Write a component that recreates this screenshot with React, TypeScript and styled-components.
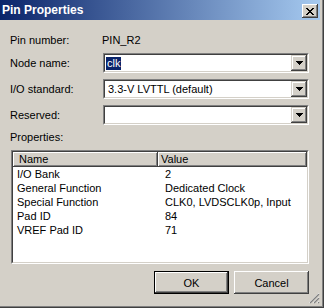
import React from 'react';
import styled, { createGlobalStyle } from 'styled-components';

const Global = createGlobalStyle`
  html, body { margin: 0; padding: 0; background: #d4d0c8; }
  body {
    font-family: "Liberation Sans", Arial, sans-serif;
    font-size: 11px;
    color: #000;
  }
  * { box-sizing: border-box; }
`;

const Window = styled.div`
  width: 324px;
  height: 308px;
  background: #d4d0c8;
  display: flex;
  flex-direction: column;
  padding: 0 4px 4px 0;
  box-shadow: inset -1px -1px #404040, inset -2px -2px #808080;
  position: relative;
`;

const TitleBar = styled.div`
  height: 20px;
  flex: none;
  display: flex;
  align-items: center;
  justify-content: space-between;
  padding: 0 2px 0 2px;
  background: linear-gradient(to right, #0a246a, #a6caf0);
`;

const TitleText = styled.span`
  color: #fff;
  font-weight: bold;
  font-size: 12px;
  line-height: 20px;
`;

const CloseButton = styled.div`
  width: 16px;
  height: 14px;
  margin-top: 2px;
  background: #d4d0c8;
  box-shadow: inset -1px -1px #404040, inset 1px 1px #fff, inset -2px -2px #808080;
  display: flex;
  align-items: center;
  justify-content: center;
`;

const Content = styled.div`
  flex: 1;
  display: flex;
  flex-direction: column;
  padding: 13px 11px 0 10px;
`;

const Form = styled.div`
  display: grid;
  grid-template-columns: 93px 206px;
  grid-template-rows: 14px 20px 20px 20px;
  row-gap: 6px;
  align-items: center;
`;

const Label = styled.div`
  line-height: 14px;
  white-space: nowrap;
`;

const StaticValue = styled.div`
  line-height: 14px;
  margin-left: -1px;
`;

const Combo = styled.div`
  height: 20px;
  border: 1px solid;
  border-color: #808080 #fff #fff #808080;
  background: #fff;
`;

const ComboInner = styled.div`
  height: 100%;
  border: 1px solid;
  border-color: #404040 #d4d0c8 #d4d0c8 #404040;
  display: flex;
  align-items: center;
`;

const ComboText = styled.div<{ $selected?: boolean }>`
  flex: 1;
  padding-left: ${(p) => (p.$selected ? '1px' : '3px')};
  line-height: 14px;
  white-space: nowrap;
  overflow: hidden;
`;

const Selection = styled.span`
  background: #0a246a;
  color: #fff;
  padding: 0 1px;
  display: inline-block;
  line-height: 13px;
`;

const DropButton = styled.div`
  width: 16px;
  height: 16px;
  flex: none;
  background: #d4d0c8;
  box-shadow: inset -1px -1px #404040, inset 1px 1px #d4d0c8, inset -2px -2px #808080, inset 2px 2px #fff;
  display: flex;
  align-items: center;
  justify-content: center;
`;

const SectionLabel = styled.div`
  margin-top: 5px;
  line-height: 14px;
`;

const ListBox = styled.div`
  margin: 6px 0 0 1px;
  height: 114px;
  border: 1px solid;
  border-color: #808080 #fff #fff #808080;
  background: #fff;
`;

const ListInner = styled.div`
  height: 100%;
  border: 1px solid;
  border-color: #404040 #d4d0c8 #d4d0c8 #404040;
  display: flex;
  flex-direction: column;
`;

const HeaderRow = styled.div`
  display: grid;
  grid-template-columns: 145px 1fr;
  height: 15px;
`;

const HeaderCell = styled.div<{ $pad: number }>`
  background: #d4d0c8;
  box-shadow: inset -1px -1px #404040, inset 1px 1px #fff, inset -2px -2px #808080;
  padding-left: ${(p) => p.$pad}px;
  line-height: 15px;
`;

const DataRow = styled.div`
  display: grid;
  grid-template-columns: 145px 1fr;
  height: 14px;
  line-height: 14px;
`;

const DataCell = styled.div<{ $pad: number }>`
  padding-left: ${(p) => p.$pad}px;
  white-space: nowrap;
`;

const ButtonRow = styled.div`
  margin-top: 7px;
  display: flex;
  justify-content: flex-end;
  gap: 5px;
`;

const Button = styled.div<{ $default?: boolean }>`
  width: 75px;
  height: 23px;
  background: #d4d0c8;
  display: flex;
  align-items: center;
  justify-content: center;
  box-shadow: ${(p) =>
    p.$default
      ? 'inset 0 0 0 1px #000, inset -2px -2px #404040, inset 2px 2px #fff, inset -3px -3px #808080'
      : 'inset -1px -1px #404040, inset 1px 1px #fff, inset -2px -2px #808080'};
`;

const Grip = styled.svg`
  position: absolute;
  right: 4px;
  bottom: 4px;
`;

const Arrow = () => (
  <svg width="7" height="4" viewBox="0 0 7 4">
    <path d="M0 0h7v1H0zM1 1h5v1H1zM2 2h3v1H2zM3 3h1v1H3z" fill="#000" />
  </svg>
);

const rows: [string, string][] = [
  ['I/O Bank', '2'],
  ['General Function', 'Dedicated Clock'],
  ['Special Function', 'CLK0, LVDSCLK0p, Input'],
  ['Pad ID', '84'],
  ['VREF Pad ID', '71'],
];

export default function App() {
  return (
    <>
      <Global />
      <Window>
        <TitleBar>
          <TitleText>Pin Properties</TitleText>
          <CloseButton>
            <svg width="8" height="7" viewBox="0 0 8 7">
              <path
                d="M0 0h2v1H0zM6 0h2v1H6zM1 1h2v1H1zM5 1h2v1H5zM2 2h4v1H2zM3 3h2v1H3zM2 4h4v1H2zM1 5h2v1H1zM5 5h2v1H5zM0 6h2v1H0zM6 6h2v1H6z"
                fill="#000"
              />
            </svg>
          </CloseButton>
        </TitleBar>
        <Content>
          <Form>
            <Label>Pin number:</Label>
            <StaticValue>PIN_R2</StaticValue>
            <Label>Node name:</Label>
            <Combo>
              <ComboInner>
                <ComboText $selected>
                  <Selection>clk</Selection>
                </ComboText>
                <DropButton>
                  <Arrow />
                </DropButton>
              </ComboInner>
            </Combo>
            <Label>I/O standard:</Label>
            <Combo>
              <ComboInner>
                <ComboText>3.3-V LVTTL (default)</ComboText>
                <DropButton>
                  <Arrow />
                </DropButton>
              </ComboInner>
            </Combo>
            <Label>Reserved:</Label>
            <Combo>
              <ComboInner>
                <ComboText />
                <DropButton>
                  <Arrow />
                </DropButton>
              </ComboInner>
            </Combo>
          </Form>
          <SectionLabel>Properties:</SectionLabel>
          <ListBox>
            <ListInner>
              <HeaderRow>
                <HeaderCell $pad={6}>Name</HeaderCell>
                <HeaderCell $pad={3}>Value</HeaderCell>
              </HeaderRow>
              {rows.map(([n, v]) => (
                <DataRow key={n}>
                  <DataCell $pad={4}>{n}</DataCell>
                  <DataCell $pad={7}>{v}</DataCell>
                </DataRow>
              ))}
            </ListInner>
          </ListBox>
          <ButtonRow>
            <Button $default>OK</Button>
            <Button>Cancel</Button>
          </ButtonRow>
        </Content>
        <Grip width="12" height="12" viewBox="0 0 12 12">
          <path d="M11 1L1 11M11 5L5 11M11 9L9 11" stroke="#fff" strokeWidth="1" />
          <path d="M11 2L2 11M11 6L6 11M11 10L10 11" stroke="#808080" strokeWidth="1.4" />
        </Grip>
      </Window>
    </>
  );
}
